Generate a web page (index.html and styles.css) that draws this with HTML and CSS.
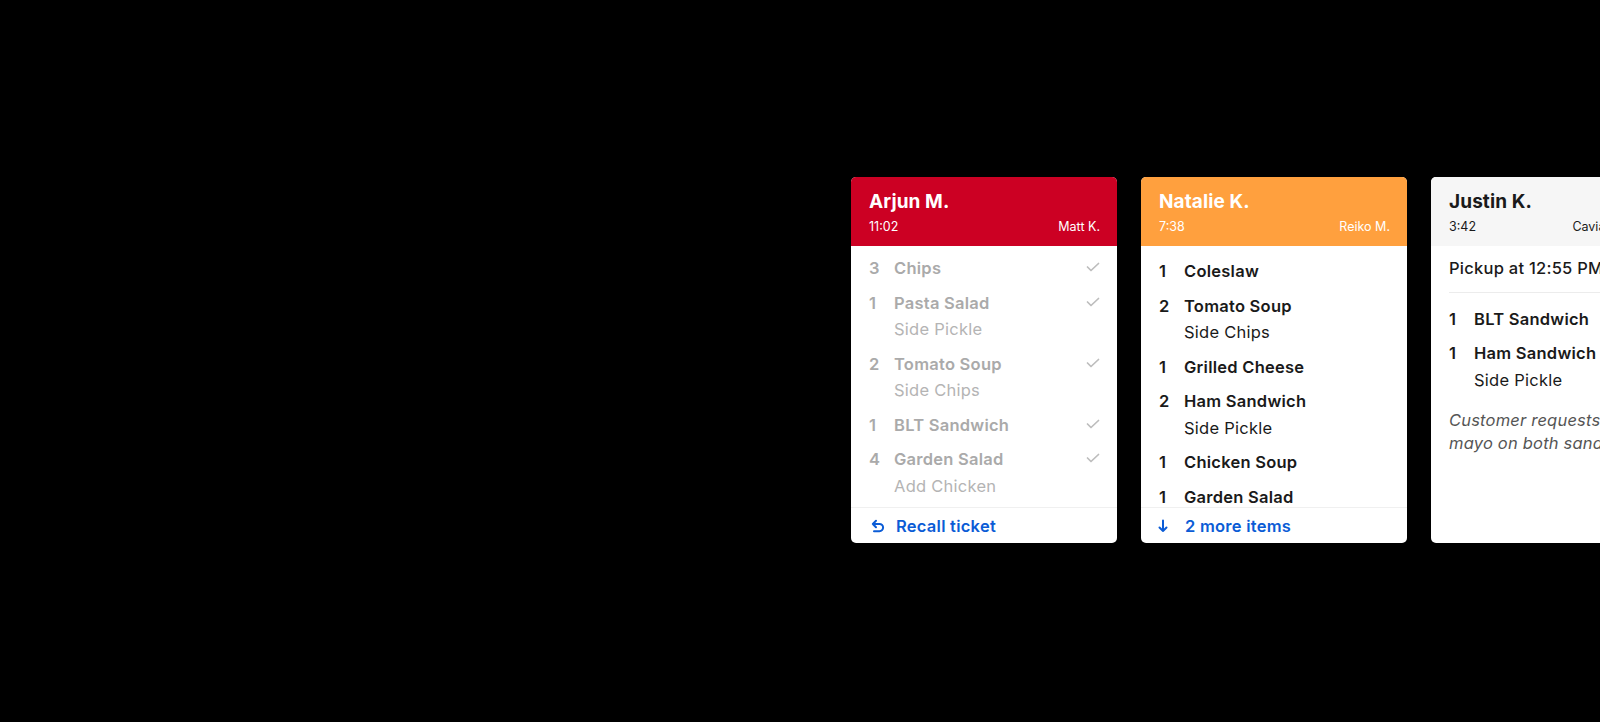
FILE: index.html
```html
<!DOCTYPE html>
<html>
<head>
<meta charset="utf-8">
<link rel="stylesheet" href="styles.css">
</head>
<body>
<div class="board">
  <div class="card">
    <div class="head head-red">
      <div class="name">Arjun M.</div>
      <div class="meta"><span>11:02</span><span>Matt K.</span></div>
    </div>
    <div class="body done">
      <div class="item"><span class="qty">3</span><span class="nm">Chips</span><svg class="check" viewBox="0 0 14 10"><path d="M1.5 5 L5 8.5 L12.5 1.5"/></svg></div>
      <div class="item"><span class="qty">1</span><div class="txt"><span class="nm">Pasta Salad</span><span class="mod">Side Pickle</span></div><svg class="check" viewBox="0 0 14 10"><path d="M1.5 5 L5 8.5 L12.5 1.5"/></svg></div>
      <div class="item"><span class="qty">2</span><div class="txt"><span class="nm">Tomato Soup</span><span class="mod">Side Chips</span></div><svg class="check" viewBox="0 0 14 10"><path d="M1.5 5 L5 8.5 L12.5 1.5"/></svg></div>
      <div class="item"><span class="qty">1</span><span class="nm">BLT Sandwich</span><svg class="check" viewBox="0 0 14 10"><path d="M1.5 5 L5 8.5 L12.5 1.5"/></svg></div>
      <div class="item"><span class="qty">4</span><div class="txt"><span class="nm">Garden Salad</span><span class="mod">Add Chicken</span></div><svg class="check" viewBox="0 0 14 10"><path d="M1.5 5 L5 8.5 L12.5 1.5"/></svg></div>
    </div>
    <div class="foot">
      <svg class="ficon" viewBox="0 0 14 14"><path d="M5 1.8 L1.8 5 L5 8.2 M1.8 5 H8.5 A3.6 3.6 0 0 1 8.5 12.2 H3"/></svg>
      <span>Recall ticket</span>
    </div>
  </div>

  <div class="card">
    <div class="head head-orange">
      <div class="name">Natalie K.</div>
      <div class="meta"><span>7:38</span><span>Reiko M.</span></div>
    </div>
    <div class="body body-low">
      <div class="item"><span class="qty">1</span><span class="nm">Coleslaw</span></div>
      <div class="item"><span class="qty">2</span><div class="txt"><span class="nm">Tomato Soup</span><span class="mod">Side Chips</span></div></div>
      <div class="item"><span class="qty">1</span><span class="nm">Grilled Cheese</span></div>
      <div class="item"><span class="qty">2</span><div class="txt"><span class="nm">Ham Sandwich</span><span class="mod">Side Pickle</span></div></div>
      <div class="item"><span class="qty">1</span><span class="nm">Chicken Soup</span></div>
      <div class="item"><span class="qty">1</span><span class="nm">Garden Salad</span></div>
    </div>
    <div class="foot">
      <svg class="ficon ficon-down" viewBox="0 0 10 14"><path d="M5 1.5 V12 M1.5 8.5 L5 12 L8.5 8.5"/></svg>
      <span>2 more items</span>
    </div>
  </div>

  <div class="card">
    <div class="head head-grey">
      <div class="name">Justin K.</div>
      <div class="meta"><span>3:42</span><span class="source">Caviar Delivery</span></div>
    </div>
    <div class="body">
      <div class="pickup">Pickup at 12:55 PM</div>
      <div class="item"><span class="qty">1</span><span class="nm">BLT Sandwich</span></div>
      <div class="item"><span class="qty">1</span><div class="txt"><span class="nm">Ham Sandwich</span><span class="mod">Side Pickle</span></div></div>
      <div class="note">Customer requests no<br>mayo on both sandwiches.</div>
    </div>
  </div>
</div>
</body>
</html>
```

FILE: styles.css
```css
html, body {
  margin: 0;
  padding: 0;
  background: #000;
  height: 100%;
  overflow: hidden;
}
body {
  font-family: "Inter", "Noto Sans", sans-serif;
}
.board {
  display: flex;
  gap: 24px;
  padding: 177px 0 0 851px;
  width: max-content;
}
.card {
  width: 266px;
  height: 366px;
  background: #fff;
  border-radius: 5px;
  overflow: hidden;
  display: flex;
  flex-direction: column;
}
.head {
  height: 69px;
  box-sizing: border-box;
  padding: 12px 17px 0 18px;
  color: #fff;
  flex-shrink: 0;
}
.head-red { background: #cc0023; }
.head-orange { background: #ffa03e; }
.head-grey { background: #f6f6f6; color: #1a1a1a; }
.name {
  font-size: 19px;
  font-weight: 700;
  line-height: 26px;
  letter-spacing: 0.1px;
}
.meta {
  display: flex;
  justify-content: space-between;
  font-size: 12.5px;
  line-height: 16px;
  margin-top: 4px;
}
.source {
  padding-right: 18px;
}
.body {
  flex: 1;
  overflow: hidden;
  padding: 9px 17px 0 18px;
  display: flex;
  flex-direction: column;
  gap: 8px;
  min-height: 0;
}
.body-low {
  padding-top: 12px;
}
.item {
  display: flex;
  align-items: flex-start;
  font-size: 16.5px;
  line-height: 26.5px;
  letter-spacing: 0.25px;
  color: #1a1a1a;
  flex-shrink: 0;
}
.qty {
  width: 25px;
  font-weight: 600;
  flex-shrink: 0;
}
.txt {
  display: flex;
  flex-direction: column;
}
.nm {
  font-weight: 600;
}
.mod {
  font-weight: 400;
}
.check {
  margin-left: auto;
  margin-top: 7px;
  width: 14px;
  height: 10px;
  fill: none;
  stroke: #bdbdbd;
  stroke-width: 1.7;
  stroke-linecap: round;
  stroke-linejoin: round;
}
.done .item { color: #aaaaaa; }
.done .mod { color: #b4b4b4; }
.foot {
  height: 36px;
  flex-shrink: 0;
  border-top: 1px solid #f0f0f0;
  box-sizing: border-box;
  display: flex;
  align-items: center;
  padding: 0 0 0 20px;
  color: #0b5cd6;
  font-size: 16.5px;
  letter-spacing: 0.25px;
  font-weight: 600;
}
.ficon {
  width: 14px;
  height: 14px;
  margin-right: 11px;
  fill: none;
  stroke: #0b5cd6;
  stroke-width: 2;
  stroke-linecap: round;
  stroke-linejoin: round;
}
.ficon-down {
  width: 10px;
  margin-left: -3px;
  margin-right: 17px;
}
.pickup {
  font-size: 16.5px;
  line-height: 26.6px;
  letter-spacing: 0.25px;
  font-weight: 500;
  color: #1a1a1a;
  padding-bottom: 10px;
  border-bottom: 1px solid #ececec;
  margin-bottom: 5px;
}
.note {
  font-style: italic;
  font-size: 16.5px;
  line-height: 22.5px;
  letter-spacing: 0.2px;
  color: #555;
  margin-top: 8px;
  white-space: nowrap;
}
```
